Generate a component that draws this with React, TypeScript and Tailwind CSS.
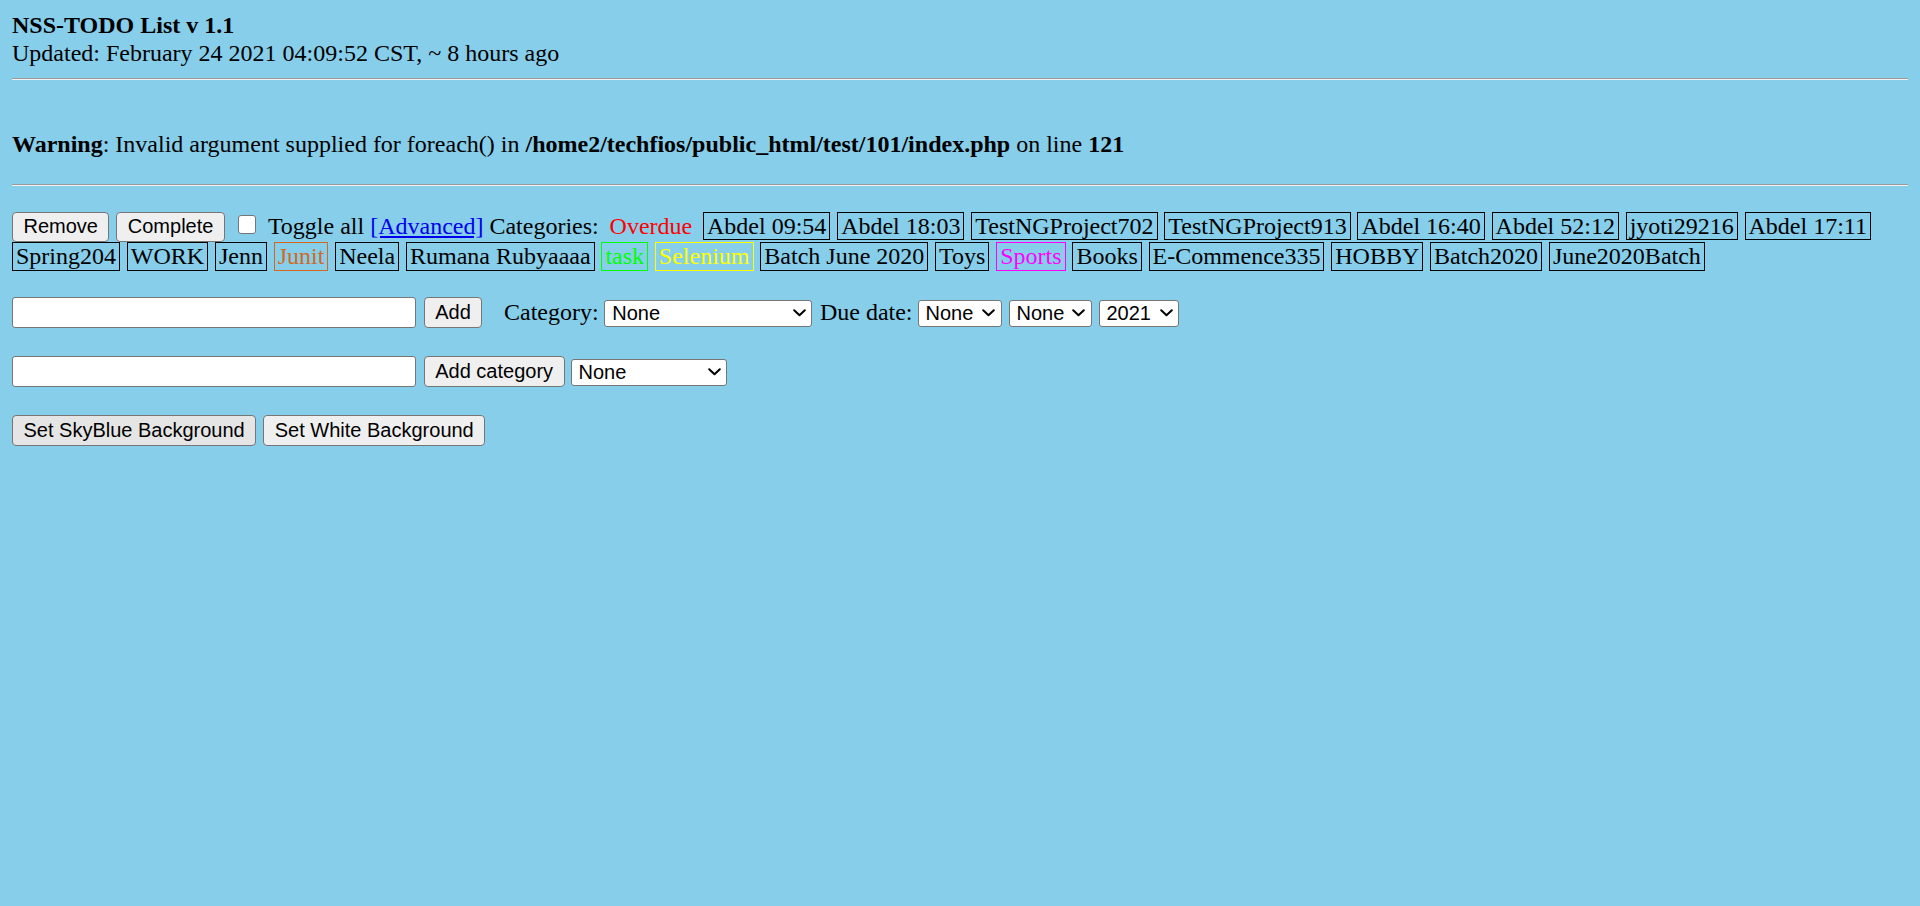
import React from "react";

const serif = "font-['Liberation_Serif','Times_New_Roman',serif]";

function Tag({ children, color }: { children: React.ReactNode; color?: string }) {
  return (
    <span
      className={`${color ?? "text-black border-black"} border px-[3px] leading-[26.4px] h-[28.4px] whitespace-pre`}
    >
      {children}
    </span>
  );
}

function Btn({ children, className }: { children: React.ReactNode; className?: string }) {
  return (
    <button
      type="button"
      className={`font-['Liberation_Sans',Arial,sans-serif] text-[20px] leading-[23px] text-black border border-[#767676] rounded-[4px] px-[10.5px] whitespace-pre ${className ?? "bg-[#efefef] h-[31px]"}`}
    >
      {children}
    </button>
  );
}

function Sel({ value, className }: { value: string; className: string }) {
  return (
    <div className={`relative h-[27px] shrink-0 ${className}`}>
      <select
        defaultValue={value}
        className="appearance-none w-full h-full bg-white border border-[#767676] rounded-[3px] pl-[7px] pr-[24px] font-['Liberation_Sans',Arial,sans-serif] text-[20px] leading-[23px] text-black outline-none"
      >
        <option>{value}</option>
      </select>
      <svg
        className="pointer-events-none absolute right-[6.5px] top-[10px]"
        width="13"
        height="8"
        viewBox="0 0 13 8"
        fill="none"
      >
        <polyline points="1.2,1.2 6.5,6.3 11.8,1.2" stroke="#000" strokeWidth="2" strokeLinecap="round" strokeLinejoin="round" />
      </svg>
    </div>
  );
}

function Input({ className }: { className?: string }) {
  return (
    <input
      type="text"
      className={`w-[404px] h-[31px] bg-white border border-[#767676] rounded-[3px] shrink-0 outline-none ${className ?? ""}`}
    />
  );
}

function Hr({ className }: { className: string }) {
  return <div className={`h-0 border-t border-[#9a9a9a] border-b border-b-[#f2f2f2] ${className}`} />;
}

export default function App() {
  const row1 = ["Abdel 09:54", "Abdel 18:03", "TestNGProject702", "TestNGProject913", "Abdel 16:40", "Abdel 52:12", "jyoti29216", "Abdel 17:11"];
  const row2: [string, string?][] = [
    ["Spring204"],
    ["WORK"],
    ["Jenn"],
    ["Junit", "text-[#d2691e] border-[#d2691e]"],
    ["Neela"],
    ["Rumana Rubyaaaa"],
    ["task", "text-[#00ff00] border-[#00ff00]"],
    ["Selenium", "text-[#ffff00] border-[#ffff00]"],
    ["Batch June 2020"],
    ["Toys"],
    ["Sports", "text-[#ff00ff] border-[#ff00ff]"],
    ["Books"],
    ["E-Commence335"],
    ["HOBBY"],
    ["Batch2020"],
    ["June2020Batch"],
  ];
  return (
    <div className={`min-h-[906px] w-full bg-[#87ceeb] p-[12px] text-black text-[24px] leading-[27.6px] ${serif}`}>
      <div className="font-bold">NSS-TODO List v 1.1</div>
      <div>Updated: February 24 2021 04:09:52 CST, ~ 8 hours ago</div>
      <Hr className="mt-[11px]" />
      <div className="mt-[51px]">
        <b>Warning</b>: Invalid argument supplied for foreach() in <b>/home2/techfios/public_html/test/101/index.php</b> on line <b>121</b>
      </div>
      <Hr className="mt-[25px]" />

      <div className="mt-[25.9px] flex flex-wrap items-start gap-x-[6.8px] gap-y-[0.6px]">
        <Btn className="bg-[#efefef] h-[30px]">Remove</Btn>
        <Btn className="bg-[#efefef] h-[30px]">Complete</Btn>
        <span className="ml-[6px] mr-[5px] mt-[3.3px] w-[18.4px] h-[19px] bg-white border border-[#767676] rounded-[3px] shrink-0" />
        <span className="leading-[28.4px] whitespace-pre">
          Toggle all <a href="#" className="text-[#0000ee] underline">[Advanced]</a> Categories:
        </span>
        <span className="border border-transparent px-[3px] leading-[26.4px] text-[#ff0000]">Overdue</span>
        {row1.map((t) => (
          <Tag key={t}>{t}</Tag>
        ))}
        {row2.map(([t, c]) => (
          <Tag key={t} color={c}>
            {t}
          </Tag>
        ))}
      </div>

      <div className="mt-[26.8px] flex items-center">
        <Input />
        <Btn className="bg-[#efefef] h-[31px] ml-[7.7px]">Add</Btn>
        <span className="ml-[21.7px] whitespace-pre">Category:</span>
        <Sel value="None" className="ml-[5.6px] w-[208px]" />
        <span className="ml-[7.7px] whitespace-pre">Due date:</span>
        <Sel value="None" className="ml-[5px] w-[84px]" />
        <Sel value="None" className="ml-[7px] w-[83.4px]" />
        <Sel value="2021" className="ml-[6.6px] w-[80.7px]" />
      </div>

      <div className="mt-[27.5px] flex items-center">
        <Input />
        <Btn className="bg-[#efefef] h-[31px] ml-[7.7px]">Add category</Btn>
        <Sel value="None" className="ml-[6px] w-[156.7px]" />
      </div>

      <div className="mt-[28px] flex items-center">
        <Btn className="bg-[#e5e5e5] h-[31.4px]">Set SkyBlue Background</Btn>
        <Btn className="bg-[#efefef] h-[31.4px] ml-[7px]">Set White Background</Btn>
      </div>
    </div>
  );
}
